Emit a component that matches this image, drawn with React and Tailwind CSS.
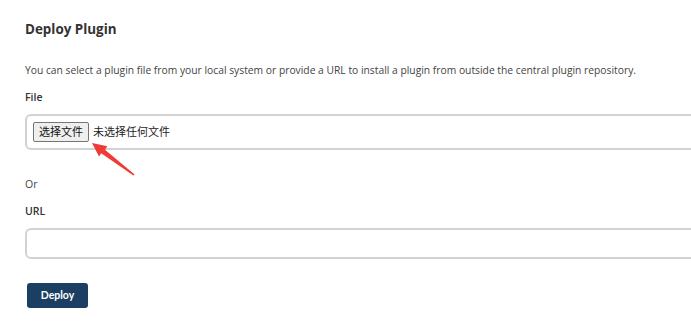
export default function App() {
  return (
    <div className="relative w-[691px] h-[323px] overflow-hidden bg-white" style={{ fontFamily: '"Open Sans", "Noto Sans CJK SC", sans-serif' }}>
      <div className="pl-[25px] pt-[19px] w-[720px]">
        <h1 className="text-[13.4px] font-bold text-[#333] leading-[20px]">Deploy Plugin</h1>
        <p className="mt-[23px] text-[10.3px] text-[#444] leading-[16px]">
          You can select a plugin file from your local system or provide a URL to install a plugin from outside the central plugin repository.
        </p>
        <div className="mt-[11px] text-[10.5px] font-semibold text-[#333] leading-[16px]">File</div>
        <div className="mt-[9px] h-[36px] border-2 border-[#cfd3d6] rounded-[6px] flex items-center pl-[6px]">
          <button className="h-[20px] px-[5px] bg-[#efefef] border border-[#767676] rounded-[2px] text-[11px] text-[#111] leading-[16px]">选择文件</button>
          <span className="ml-[4px] text-[11px] text-[#222]">未选择任何文件</span>
        </div>
        <div className="mt-[26px] text-[10.5px] text-[#444] leading-[16px]">Or</div>
        <div className="mt-[11px] text-[10.5px] font-semibold text-[#333] leading-[16px]">URL</div>
        <div className="mt-[9px] h-[31px] border-2 border-[#cfd3d6] rounded-[6px]"></div>
        <button className="mt-[24px] ml-[2px] w-[61px] h-[25px] bg-[#1b3f62] rounded-[3px] text-white text-[10.5px] font-bold" style={{ fontFamily: 'Lato, sans-serif' }}>Deploy</button>
      </div>
      <svg className="absolute left-0 top-0" width="691" height="323" viewBox="0 0 691 323">
        <polygon points="92,143 107.3,146.3 105,149.8 134.6,174.4 133.4,175.6 101.2,153.2 99,156.6" fill="#f03a35" />
      </svg>
    </div>
  );
}
